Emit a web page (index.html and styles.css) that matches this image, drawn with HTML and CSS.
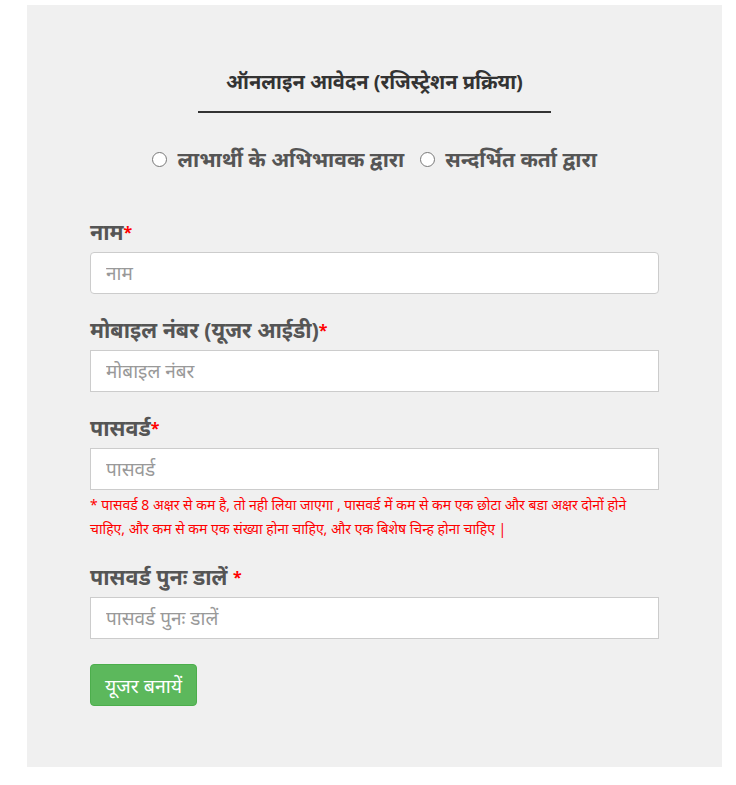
FILE: index.html
```html
<!DOCTYPE html>
<html>

<head>
  <meta charset="utf-8">
  <link rel="stylesheet" href="styles.css">
</head>

<body>
  <div class="panel">
    <div class="title">ऑनलाइन आवेदन (रजिस्ट्रेशन प्रक्रिया)</div>

    <div class="choice">
      <label><input type="radio" name="by"> लाभार्थी के अभिभावक द्वारा</label>
      <label><input type="radio" name="by"> सन्दर्भित कर्ता द्वारा</label>
    </div>

    <form class="form">
      <div class="group">
        <label class="lbl">नाम<span class="req">*</span></label>
        <input class="field round" type="text" placeholder="नाम">
      </div>

      <div class="group">
        <label class="lbl">मोबाइल नंबर (यूजर आईडी)<span class="req">*</span></label>
        <input class="field" type="text" placeholder="मोबाइल नंबर">
      </div>

      <div class="group">
        <label class="lbl">पासवर्ड<span class="req">*</span></label>
        <input class="field" type="password" placeholder="पासवर्ड">
        <div class="help">* पासवर्ड 8 अक्षर से कम है, तो नही लिया जाएगा , पासवर्ड में कम से कम एक छोटा और बडा अक्षर दोनों होने चाहिए, और कम से कम एक संख्या होना चाहिए, और एक बिशेष चिन्ह होना चाहिए |</div>
      </div>

      <div class="group">
        <label class="lbl">पासवर्ड पुनः डालें <span class="req">*</span></label>
        <input class="field" type="password" placeholder="पासवर्ड पुनः डालें">
      </div>

      <button type="button" class="button">यूजर बनायें</button>
    </form>
  </div>
</body>

</html>
```

FILE: styles.css
```css
body {
  margin: 0;
  background-color: #fff;
  font-family: "Noto Sans", "Liberation Sans", sans-serif;
}

.panel {
  background-color: #f0f0f0;
  margin: 5px 0 0 27px;
  width: 695px;
  height: 762px;
  box-sizing: border-box;
  padding-top: 65px;
}

.title {
  width: 353px;
  margin: 0 auto;
  text-align: center;
  font-size: 20px;
  font-weight: bold;
  line-height: 24px;
  color: #333;
  padding-bottom: 17px;
  border-bottom: 2px solid #333;
}

/* radio row */
.choice {
  margin-top: 32px;
  text-align: center;
  font-size: 21px;
  font-weight: bold;
  line-height: 28px;
  color: #555;
}

.choice label {
  margin: 0 5px;
}

.choice input {
  margin: 0 5px 0 0;
  width: 15px;
  height: 15px;
  vertical-align: 0;
}

.form {
  padding: 0 63px;
  margin-top: 45px;
}

.group {
  margin-bottom: 22px;
}

.lbl {
  display: block;
  font-size: 21.5px;
  font-weight: bold;
  line-height: 28px;
  color: #555;
  margin-bottom: 6px;
}

.req {
  color: red;
  font-size: 16px;
  vertical-align: 2px;
}

.field {
  display: block;
  width: 100%;
  height: 42px;
  box-sizing: border-box;
  border: 1px solid #ccc;
  background: #fff;
  padding: 0 15px;
  font-family: inherit;
  font-size: 19px;
  color: #555;
}

.field::placeholder {
  color: #999;
}

.round {
  border-radius: 4px;
}

.help {
  color: red;
  font-size: 14px;
  line-height: 24px;
  margin-top: 3px;
}

.button {
  background-color: #5cb85c;
  border: 1px solid #4cae4c;
  color: white;
  height: 42px;
  padding: 0 14px;
  font-family: inherit;
  font-size: 19.5px;
  border-radius: 4px;
  cursor: pointer;
  margin-top: 3px;
}
```
